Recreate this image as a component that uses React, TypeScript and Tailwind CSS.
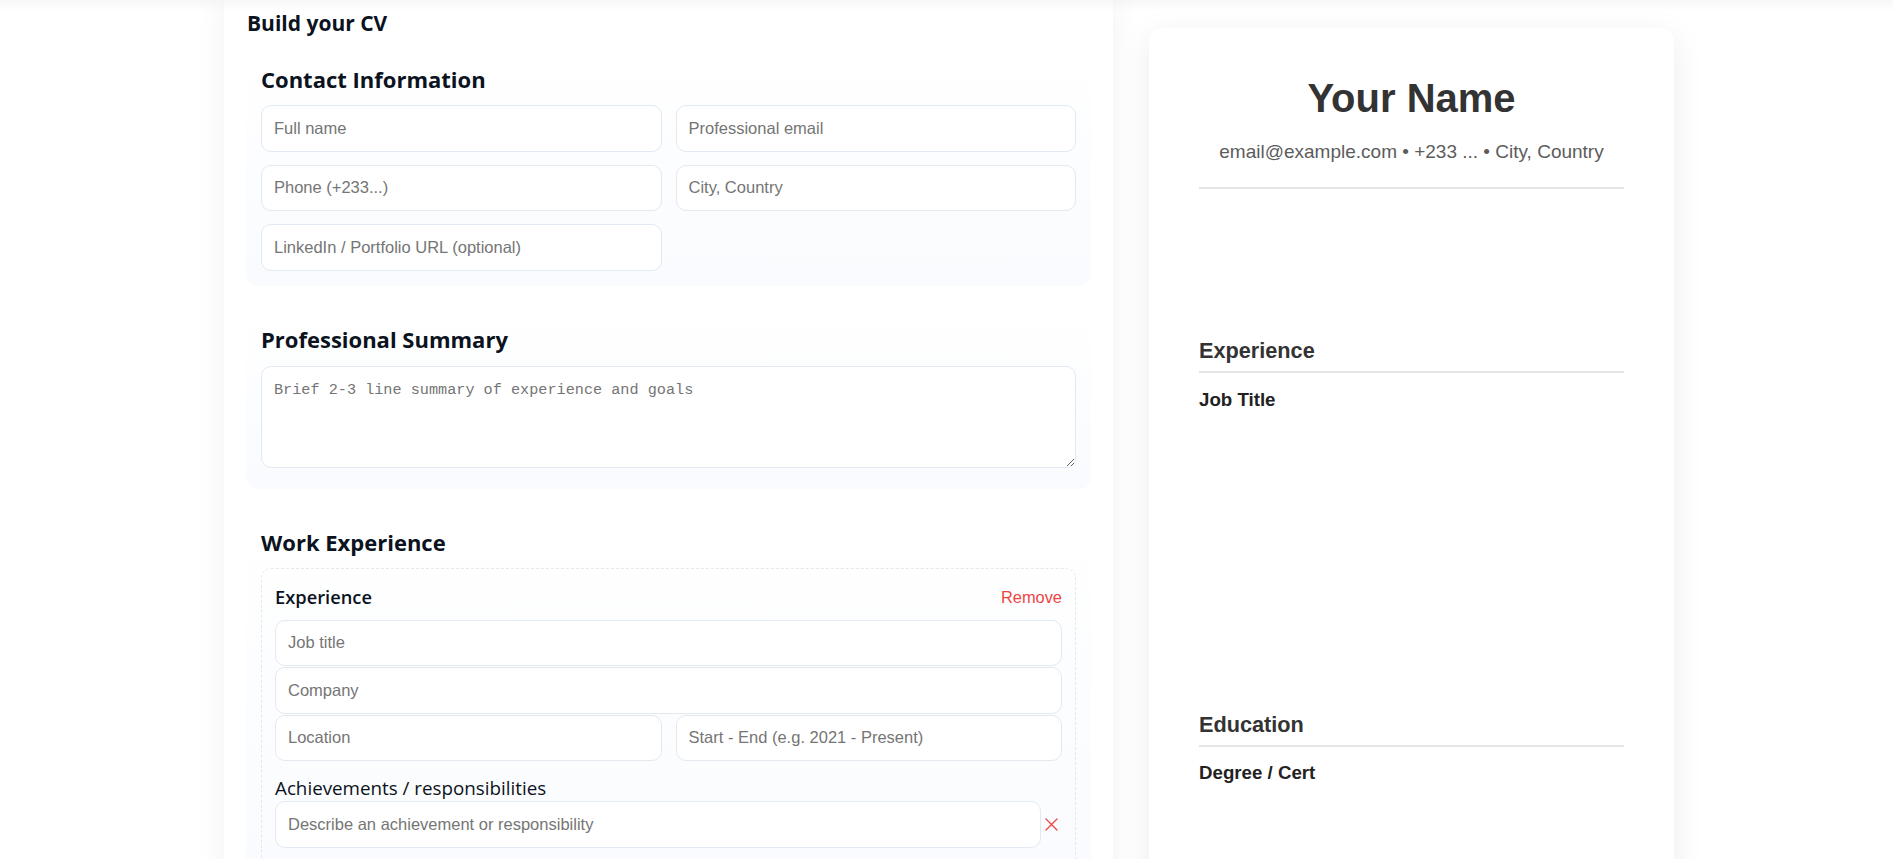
import React from "react";

const inputCls =
  "block w-full h-[46.5px] rounded-[10px] border border-[#e3e9f1] bg-white px-[12px] text-[16.5px] font-['Liberation_Sans',Arial,sans-serif] text-[#111] placeholder:text-[#757575] outline-none";

const sectionCls =
  "rounded-[12px] bg-gradient-to-b from-white to-[#f9fbfe] p-[15px]";

const h2Base =
  "font-['Open_Sans',sans-serif] font-bold text-[22px] leading-[28px] text-[#0b1220]";

function XIcon() {
  return (
    <svg width="13" height="13" viewBox="0 0 13 13" fill="none">
      <path d="M1 1L12 12M12 1L1 12" stroke="#ef4444" strokeWidth="1.3" strokeLinecap="round" />
    </svg>
  );
}

export default function App() {
  return (
    <div className="min-h-screen w-full bg-white overflow-hidden relative">
      <div className="fixed top-0 left-0 right-0 h-0 shadow-[0_0_10px_5px_rgba(0,0,0,0.045)] z-10" />
      <div className="flex items-start gap-[36px] ml-[224px]">
        {/* Left editor card */}
        <div className="w-[889px] shrink-0 bg-white px-[22px] pt-[9px] pb-[40px] shadow-[0_0_28px_rgba(15,23,42,0.06)]">
          <h1 className="font-['Open_Sans',sans-serif] font-bold text-[21px] leading-[28px] text-[#0b1220] pl-[1px]">
            Build your CV
          </h1>

          <div className="mt-[13px] flex flex-col gap-[24px]">
            {/* Contact */}
            <section className={sectionCls}>
              <h2 className={h2Base + " mb-[12px]"}>Contact Information</h2>
              <div className="grid grid-cols-2 gap-x-[14px] gap-y-[13px]">
                <input className={inputCls} placeholder="Full name" />
                <input className={inputCls} placeholder="Professional email" />
                <input className={inputCls} placeholder="Phone (+233...)" />
                <input className={inputCls} placeholder="City, Country" />
                <input className={inputCls} placeholder="LinkedIn / Portfolio URL (optional)" />
              </div>
            </section>

            {/* Summary */}
            <section className={sectionCls + " pb-[21px]"}>
              <h2 className={h2Base + " mb-[13px]"}>Professional Summary</h2>
              <textarea
                className="block w-full h-[102px] rounded-[10px] border border-[#e3e9f1] bg-white px-[12px] pt-[13px] pb-[11px] text-[15.2px] leading-[20px] font-['Liberation_Mono','DejaVu_Sans_Mono',monospace] placeholder:text-[#757575] outline-none"
                placeholder="Brief 2-3 line summary of experience and goals"
              />
            </section>

            {/* Work experience */}
            <section className={sectionCls}>
              <h2 className={h2Base + " mb-[12px]"}>Work Experience</h2>
              <div className="rounded-[10px] border border-dashed border-[#e5e7eb] px-[13px] pt-[16px] pb-[20px]">
                <div className="flex items-center justify-between mb-[11px]">
                  <span className="font-['Open_Sans',sans-serif] font-semibold text-[18.3px] leading-[24px] text-[#0b1220]">
                    Experience
                  </span>
                  <button className="font-['Liberation_Sans',Arial,sans-serif] text-[16.4px] leading-[20px] text-[#ef4444]">
                    Remove
                  </button>
                </div>
                <input className={inputCls} placeholder="Job title" />
                <input className={inputCls + " mt-[1px]"} placeholder="Company" />
                <div className="grid grid-cols-2 gap-x-[14px] mt-[1px]">
                  <input className={inputCls} placeholder="Location" />
                  <input className={inputCls} placeholder="Start - End (e.g. 2021 - Present)" />
                </div>
                <div className="mt-[15px] font-['Open_Sans',sans-serif] text-[18.8px] leading-[24px] text-[#0b1220]">
                  Achievements / responsibilities
                </div>
                <div className="mt-[1px] flex items-center">
                  <input className={inputCls + " flex-1"} placeholder="Describe an achievement or responsibility" />
                  <button className="w-[21px] flex justify-center">
                    <XIcon />
                  </button>
                </div>
              </div>
            </section>
          </div>
        </div>

        {/* Right preview card */}
        <div className="mt-[28px] w-[525px] shrink-0 min-h-[900px] rounded-[14px] bg-white px-[50px] pt-[46px] shadow-[0_8px_32px_rgba(15,23,42,0.08)] font-['Liberation_Sans',Arial,sans-serif]">
          <div className="border-b-2 border-[#e5e5e5] pb-[23px] text-center">
            <div className="text-[40px] leading-[48px] font-bold text-[#333]">Your Name</div>
            <div className="mt-[18px] text-[19px] leading-[24px] text-[#5c5c5c]">
              email@example.com • +233 ... • City, Country
            </div>
          </div>

          <div className="mt-[149px]">
            <div className="border-b-2 border-[#e5e5e5] pb-[7px] text-[21.7px] leading-[26px] font-bold text-[#333]">
              Experience
            </div>
            <div className="mt-[15px] text-[18.7px] leading-[24px] font-bold text-[#222]">Job Title</div>
          </div>

          <div className="mt-[300px]">
            <div className="border-b-2 border-[#e5e5e5] pb-[7px] text-[21.7px] leading-[26px] font-bold text-[#333]">
              Education
            </div>
            <div className="mt-[14px] text-[18.7px] leading-[24px] font-bold text-[#222]">Degree / Cert</div>
          </div>
        </div>
      </div>
    </div>
  );
}
